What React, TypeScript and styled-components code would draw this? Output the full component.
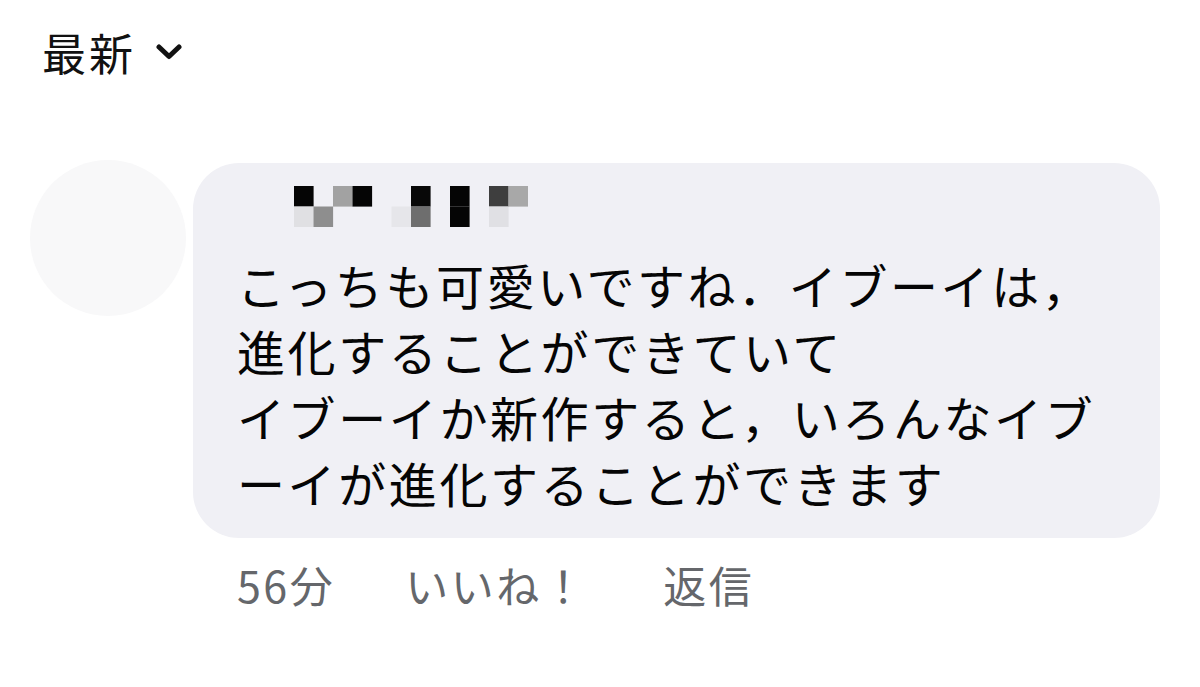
import styled, { createGlobalStyle } from "styled-components";

const GlobalStyle = createGlobalStyle`
  html, body {
    margin: 0;
    padding: 0;
    background: #ffffff;
  }
  body {
    font-family: "Noto Sans CJK JP", "Noto Sans", sans-serif;
    color: #050505;
  }
`;

const Page = styled.div`
  width: 1200px;
  height: 687px;
  box-sizing: border-box;
  padding: 27px 40px 0 30px;
  overflow: hidden;
`;

const SortButton = styled.div`
  display: flex;
  align-items: center;
  column-gap: 20px;
  padding-left: 12px;
  height: 50px;
  font-size: 44px;
  letter-spacing: 3px;
  line-height: 50px;
  color: #111;
`;

const CommentRow = styled.div`
  display: flex;
  align-items: flex-start;
  column-gap: 7px;
  margin-top: 83px;
`;

const Avatar = styled.div`
  flex: none;
  width: 156px;
  height: 156px;
  border-radius: 50%;
  background: #f8f8f9;
`;

const Column = styled.div`
  display: flex;
  flex-direction: column;
  width: 967px;
  margin-top: 3px;
`;

const Bubble = styled.div`
  background: #f0f0f5;
  border-radius: 46px;
  padding: 23px 44px 23px 44px;
`;

const NameMosaic = styled.svg`
  display: block;
  margin-left: 57px;
`;

const Message = styled.p`
  margin: 24px 0 0;
  font-size: 48px;
  line-height: 66px;
  letter-spacing: 2.6px;
  color: #050505;
`;

const Actions = styled.div`
  display: flex;
  align-items: center;
  margin-top: 22px;
  padding-left: 44px;
  font-size: 43px;
  line-height: 48px;
  letter-spacing: 2.5px;
  color: #65676b;
`;

const Action = styled.span<{ $gap?: number }>`
  white-space: nowrap;
  margin-left: ${(p) => p.$gap ?? 0}px;
`;

type Cell = [number, number, string];

const cells: Cell[] = [
  [0, 0, "#050505"],
  [0, 1, "#e0e0e3"],
  [1, 1, "#8e8e8e"],
  [2, 0, "#a2a2a2"],
  [3, 0, "#050505"],
  [5, 1, "#e6e6ea"],
  [6, 0, "#080808"],
  [6, 1, "#6e6e6e"],
  [8, 0, "#050505"],
  [8, 1, "#050505"],
  [10, 0, "#3e3e3e"],
  [10, 1, "#e0e0e4"],
  [11, 0, "#a8a8a8"],
];

const Chevron = () => (
  <svg width="26" height="16" viewBox="0 0 26 16">
    <polyline
      points="3,3 13,12.5 23,3"
      fill="none"
      stroke="#111"
      strokeWidth="5"
      strokeLinecap="round"
      strokeLinejoin="round"
    />
  </svg>
);

export default function App() {
  return (
    <>
      <GlobalStyle />
      <Page>
        <SortButton>
          <span>最新</span>
          <Chevron />
        </SortButton>
        <CommentRow>
          <Avatar />
          <Column>
            <Bubble>
              <NameMosaic width="234" height="41" viewBox="0 0 234 41">
                {cells.map(([c, r, fill]) => (
                  <rect
                    key={`${c}-${r}`}
                    x={c * 19.5}
                    y={r * 20.5}
                    width="19.6"
                    height="20.6"
                    fill={fill}
                  />
                ))}
              </NameMosaic>
              <Message>
                こっちも可愛いですね．イブーイは，
                <br />
                進化することができていて
                <br />
                イブーイか新作すると，いろんなイブ
                <br />
                ーイが進化することができます
              </Message>
            </Bubble>
            <Actions>
              <Action>56分</Action>
              <Action $gap={70}>いいね！</Action>
              <Action $gap={76}>返信</Action>
            </Actions>
          </Column>
        </CommentRow>
      </Page>
    </>
  );
}
